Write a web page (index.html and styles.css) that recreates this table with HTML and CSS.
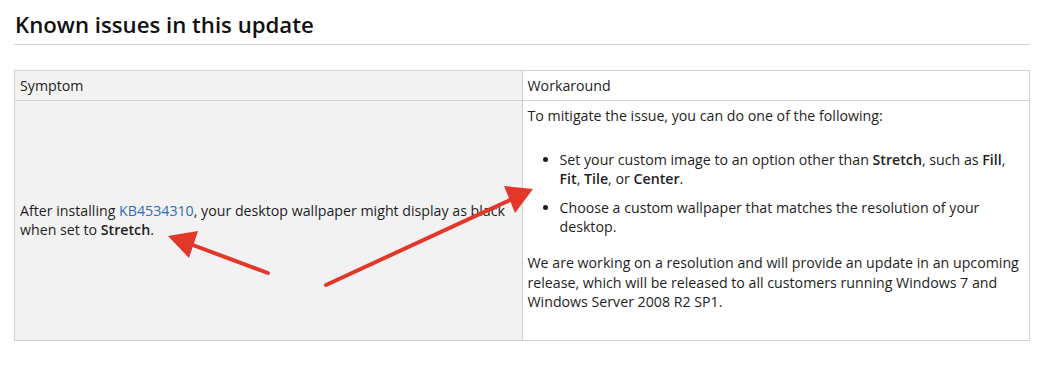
FILE: index.html
```html
<!DOCTYPE html>
<html lang="en">
<head>
    <meta charset="UTF-8">
    <title>Known issues in this update</title>
    <link rel="stylesheet" href="styles.css">
</head>
<body>
    <div class="article">
        <h2>Known issues in this update</h2>

        <div class="table-wrap">
            <table class="issues">
                <thead>
                    <tr>
                        <th class="symptom">Symptom</th>
                        <th>Workaround</th>
                    </tr>
                </thead>
                <tbody>
                    <tr>
                        <td class="symptom">After installing <a href="#">KB4534310</a>, your desktop wallpaper might display as black when set to <b>Stretch</b>.</td>
                        <td>
                            <p>To mitigate the issue, you can do one of the following:</p>
                            <ul>
                                <li>Set your custom image to an option other than <b>Stretch</b>, such as <b>Fill</b>, <b>Fit</b>, <b>Tile</b>, or <b>Center</b>.</li>
                                <li>Choose a custom wallpaper that matches the resolution of your desktop.</li>
                            </ul>
                            <p>We are working on a resolution and will provide an update in an upcoming release, which will be released to all customers running Windows 7 and Windows Server 2008 R2 SP1.</p>
                        </td>
                    </tr>
                </tbody>
            </table>

            <!-- annotation arrows drawn over the table -->
            <svg class="arrows" width="1053" height="369" viewBox="0 0 1053 369">
                <g stroke="#e2382c" stroke-width="4" stroke-linecap="round" fill="#e2382c">
                    <line x1="268" y1="273" x2="190" y2="244"/>
                    <polygon points="168,236 198,231 189,258" stroke="none"/>
                    <line x1="326" y1="285" x2="510" y2="200"/>
                    <polygon points="533,189 504,186 515,213" stroke="none"/>
                </g>
            </svg>
        </div>
    </div>
</body>
</html>
```

FILE: styles.css
```css
body {
    margin: 0;
    font-family: "Open Sans", "Noto Sans", sans-serif;
    font-size: 14.2px;
    color: #1e1e1e;
    background: #fff;
}
.article {
    padding: 10px 23px 0 14px;
}
h2 {
    margin: 0;
    padding: 0 0 4px 1px;
    font-size: 22.2px;
    font-weight: 600;
    line-height: 30px;
    color: #111;
    border-bottom: 1px solid #d4d4d4;
}
.table-wrap {
    margin-top: 25px;
}
.issues {
    width: 100%;
    border-collapse: collapse;
    table-layout: fixed;
}
.issues th, .issues td {
    border: 1px solid #d2d2d2;
    padding: 4px 5px;
    line-height: 19.6px;
    text-align: left;
}
.issues th {
    font-weight: 500;
    height: 21px;
}
.issues .symptom {
    background: #f2f2f2;
}
.issues td {
    vertical-align: top;
    padding: 5px 5px 28px;
}
.issues td.symptom {
    vertical-align: middle;
    padding: 5px;
}
.issues a {
    color: #2e6cb5;
    text-decoration: none;
}
.issues b {
    font-weight: 600;
}
.issues p {
    margin: 0;
}
.issues ul {
    margin: 24px 0 16px;
    padding-left: 32px;
}
.issues li {
    margin-bottom: 9px;
}
.arrows {
    position: absolute;
    left: 0;
    top: 0;
    pointer-events: none;
}
```
